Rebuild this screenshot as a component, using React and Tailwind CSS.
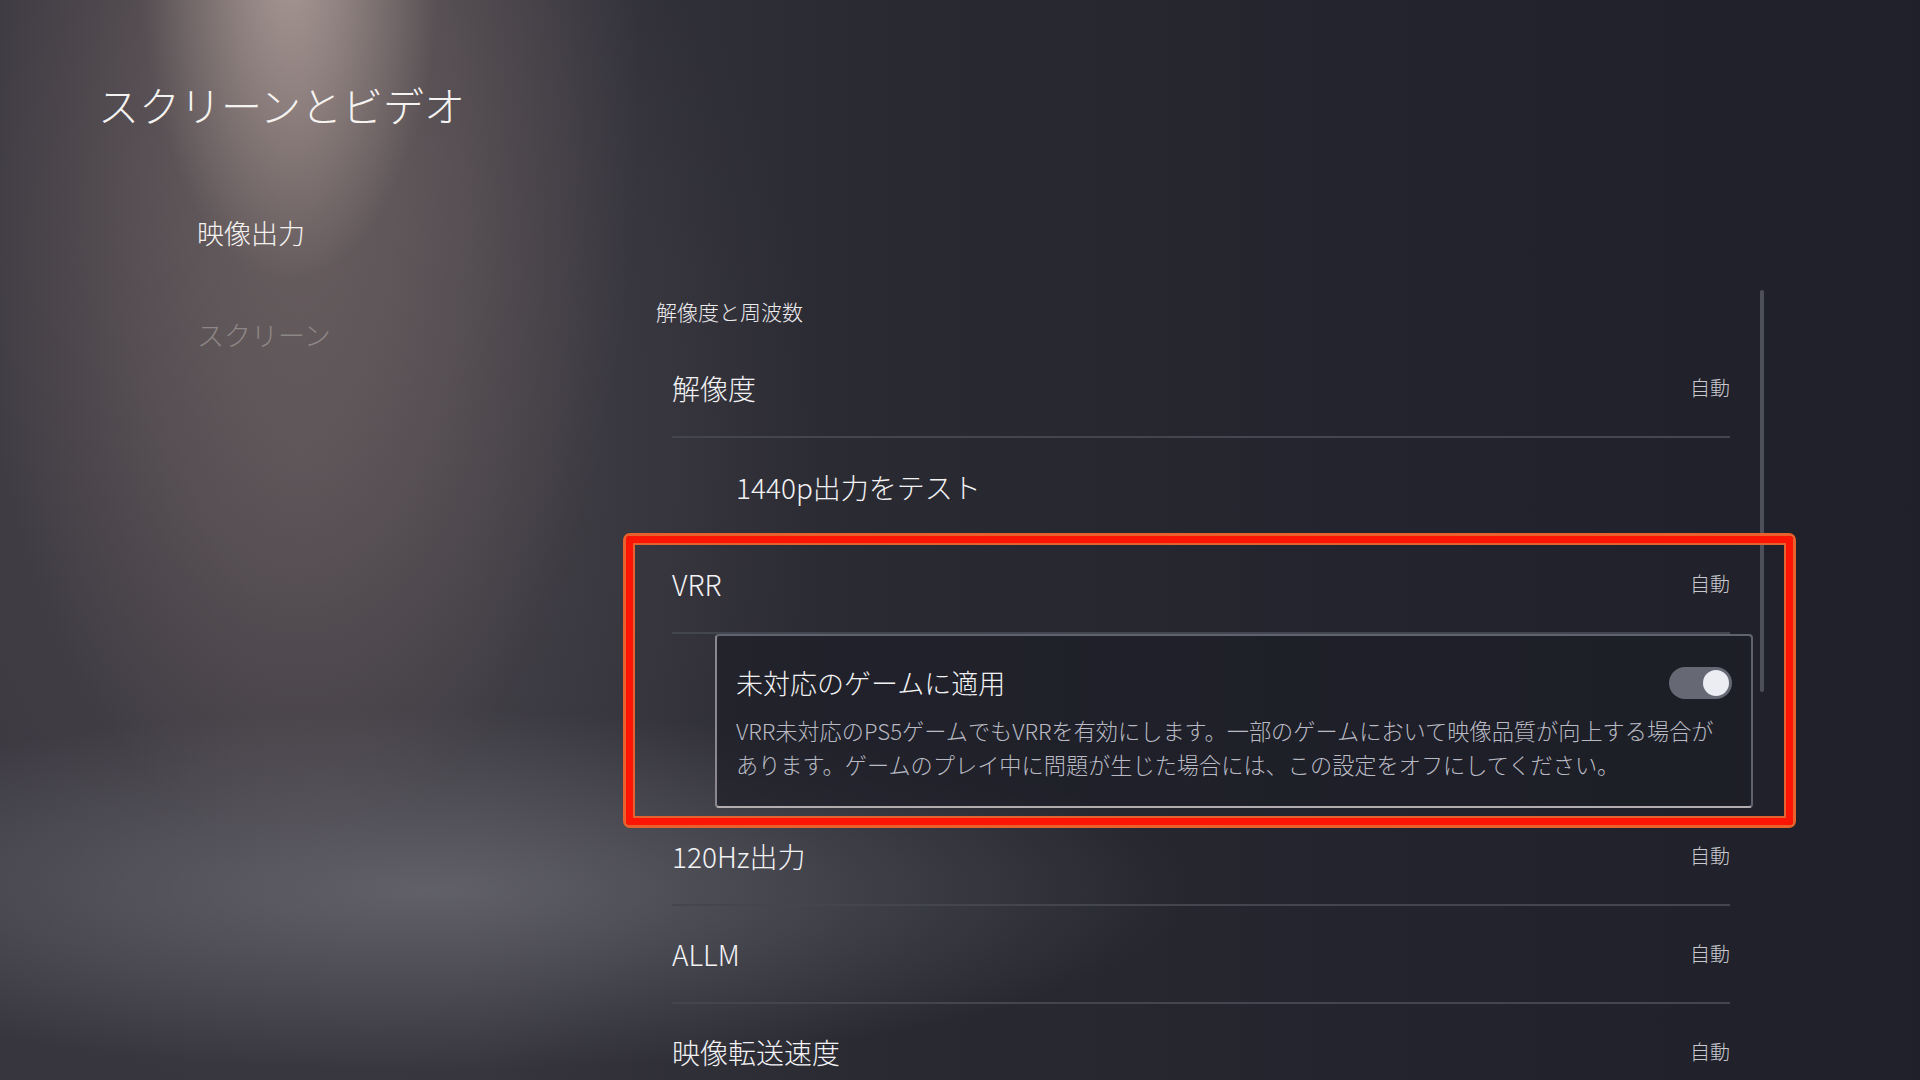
import React from 'react';

const FONT = "font-['Noto_Sans_CJK_JP','Noto_Sans',sans-serif]";

const Row = ({ label, value, indent, divider = true }) => (
    <div className={`h-[98px] flex items-center justify-between mr-[23px] ${divider ? 'border-b-2 border-[#43454f]' : ''}`}>
        <span className={`text-[28px] font-light text-[#f2f2f4] ${indent ? 'pl-[64px]' : ''}`}>{label}</span>
        {value && <span className="text-[20px] font-light text-[#c9c9cf]">{value}</span>}
    </div>
);

const Toggle = ({ on }) => (
    <div className={`w-[63px] h-[32px] rounded-full bg-[#666873] flex items-center px-[3px] ${on ? 'justify-end' : 'justify-start'}`}>
        <div className="w-[26px] h-[26px] rounded-full bg-[#ececf3]" />
    </div>
);

const App = () => {
    return (
        <div className={`relative w-[1920px] h-[1080px] overflow-hidden ${FONT} bg-[radial-gradient(ellipse_150px_320px_at_290px_-40px,rgba(205,186,178,0.65),transparent_100%),radial-gradient(ellipse_340px_760px_at_300px_100px,rgba(150,130,126,0.5),transparent_100%),radial-gradient(ellipse_520px_700px_at_300px_450px,rgba(112,102,104,0.35),transparent_100%),radial-gradient(ellipse_760px_180px_at_430px_890px,rgba(135,137,146,0.5),transparent_100%),linear-gradient(90deg,#37353d_0%,#36353d_25%,#2a2a33_45%,#23242d_70%,#1f2029_100%)]`}>
            {/* Title */}
            <div className="pt-[74px] pl-[98px] h-[134px]">
                <h1 className="h-[60px] leading-[60px] text-[41px] font-light text-[#f5f3f1]">スクリーンとビデオ</h1>
            </div>

            <div className="flex">
                {/* Side nav */}
                <div className="w-[656px] pl-[197px] pt-[76px] shrink-0">
                    <p className="h-[46px] leading-[46px] text-[27px] font-light text-[#f4f2f0]">映像出力</p>
                    <p className="mt-[56px] h-[46px] leading-[46px] text-[27px] font-light text-[#8d8785]">スクリーン</p>
                </div>

                {/* Settings list */}
                <div className="w-[1097px] shrink-0 pt-[162px]">
                    <p className="h-[30px] leading-[30px] text-[21px] font-light text-[#ecebee]">解像度と周波数</p>
                    <div className="mt-[14px] pl-[16px]">
                        <Row label="解像度" value="自動" />
                        <Row label="1440p出力をテスト" indent divider={false} />
                        <Row label="VRR" value="自動" />

                        <div className="ml-[43px] h-[174px] rounded-[4px] border-2 border-[#5f6370] border-b-[#b3adb0] border-l-[#8a8790] bg-[#1d1e27]/70 px-[19px]">
                            <div className="mt-[22px] h-[50px] flex items-center justify-between">
                                <span className="text-[27px] font-light text-[#f2f2f4]">未対応のゲームに適用</span>
                                <Toggle on />
                            </div>
                            <p className="mt-[5px] text-[22.2px] leading-[34px] font-light text-[#b9bac3] whitespace-nowrap">
                                VRR未対応のPS5ゲームでもVRRを有効にします。一部のゲームにおいて映像品質が向上する場合が
                                <br />
                                あります。ゲームのプレイ中に問題が生じた場合には、この設定をオフにしてください。
                            </p>
                        </div>

                        <Row label="120Hz出力" value="自動" />
                        <Row label="ALLM" value="自動" />
                        <Row label="映像転送速度" value="自動" />
                    </div>
                </div>

                {/* Scrollbar */}
                <div className="ml-[7px] mt-[156px] w-[4px] h-[402px] rounded-full bg-[#4d4f5a]" />
            </div>

            {/* Annotation box */}
            <div className="absolute left-[623px] top-[533px] w-[1173px] h-[295px] rounded-[7px] border-[3px] border-[#e8602c]">
                <div className="h-full rounded-[3px] border-[7px] border-[#fc1505]">
                    <div className="h-full border-2 border-[#e4622f]" />
                </div>
            </div>
        </div>
    );
};

export default App;
